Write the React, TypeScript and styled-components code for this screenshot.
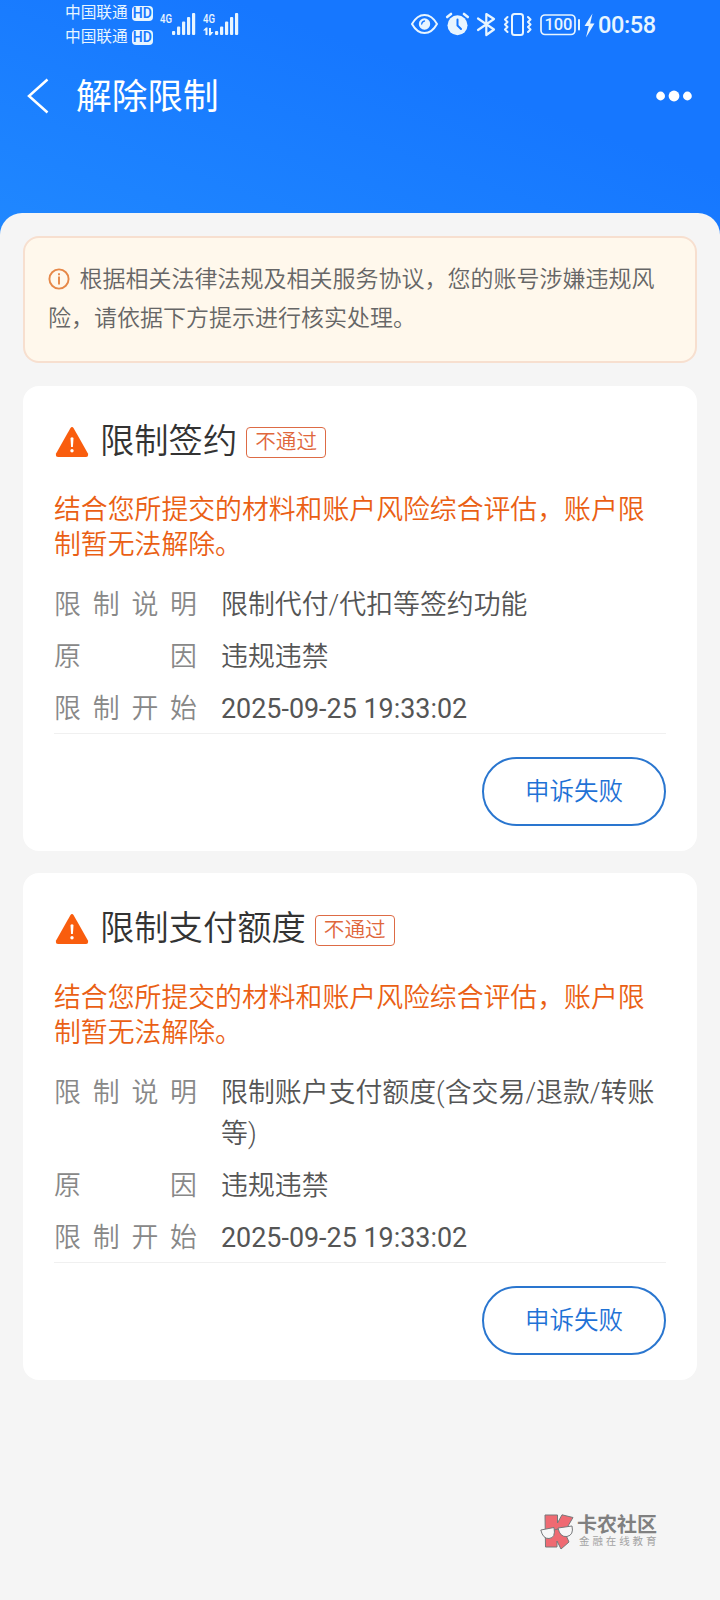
import React from 'react';
import styled, { createGlobalStyle } from 'styled-components';

const GlobalStyle = createGlobalStyle`
  * { box-sizing: border-box; }
  body {
    margin: 0;
    background: #f5f5f5;
    font-family: Roboto, "Noto Sans CJK SC", sans-serif;
    font-weight: 350;
  }
`;

const Page = styled.main`
  width: 720px;
  height: 1600px;
  display: flex;
  flex-direction: column;
  background: #f5f5f5;
  overflow: hidden;
`;

const Hero = styled.header`
  height: 240px;
  flex: none;
  color: #fff;
  background: linear-gradient(200deg, #1677ff 35%, #2088ff 100%);
`;

const StatusBar = styled.div`
  height: 49px;
  padding: 1px 63px 0 65px;
  display: flex;
  justify-content: space-between;
  color: #e8f5ff;
`;

const Carriers = styled.div`
  display: flex;
  flex-direction: column;
`;

const Carrier = styled.div`
  height: 24px;
  display: flex;
  align-items: center;
  gap: 4px;
  font-size: 15.7px;
  font-weight: 400;
  line-height: 24px;
`;

const HdBadge = styled.span`
  width: 21px;
  height: 15px;
  border-radius: 4px;
  background: #e8f5ff;
  color: #1677ff;
  font-size: 14px;
  font-weight: 600;
  line-height: 15px;
  text-align: center;
`;

const StatusGroup = styled.div`
  display: flex;
`;

const SignalIcon = styled.svg`
  display: block;
  width: 80px;
  height: 48px;
  margin-left: 6px;
`;

const TrayIcons = styled.svg`
  display: block;
  width: 187px;
  height: 48px;
`;

const Clock = styled.time`
  width: 59px;
  font-size: 23.5px;
  font-weight: 500;
  line-height: 48px;
  letter-spacing: -0.4px;
  white-space: nowrap;
`;

const NavBar = styled.nav`
  height: 94px;
  padding: 0 28px 0 27px;
  display: flex;
  align-items: center;
`;

const BackIcon = styled.svg`
  width: 22px;
  height: 36px;
  flex: none;
`;

const NavTitle = styled.h1`
  margin: 2px 0 0 27px;
  flex: 1;
  font-size: 35.7px;
  font-weight: 400;
  line-height: 94px;
`;

const MoreIcon = styled.svg`
  width: 36px;
  height: 12px;
`;

const Sheet = styled.section`
  flex: 1;
  margin-top: -27px;
  padding: 23px 23px 0;
  display: flex;
  flex-direction: column;
  border-radius: 22px 22px 0 0;
  background: #f5f5f5;
`;

const Notice = styled.div`
  height: 127px;
  margin-bottom: 0.5px;
  padding: 22px 24px 0 23px;
  border: 2px solid #f7dfcf;
  border-radius: 16px;
  background: #fff8ec;
  color: #666;
  font-size: 23px;
  line-height: 39px;
`;

const InfoIcon = styled.svg`
  width: 22px;
  height: 22px;
  margin: 0 10px 0 -0.5px;
  vertical-align: -2.5px;
`;

const Card = styled.article`
  margin-top: 22px;
  padding: 31px 31px 25px;
  border-radius: 16px;
  background: #fff;
`;

const CardHeader = styled.div`
  height: 50px;
  display: flex;
  align-items: center;
`;

const WarningIcon = styled.svg`
  width: 34px;
  height: 32px;
  margin-left: 1px;
`;

const CardTitle = styled.h2`
  margin: -2px 9px 0 11px;
  color: #333;
  font-size: 34.3px;
  font-weight: 350;
  line-height: 50px;
`;

const Tag = styled.span`
  height: 31px;
  padding: 0 8px;
  margin-top: 2px;
  border: 1px solid #dd6b45;
  border-radius: 4px;
  color: #e0673c;
  font-size: 20.6px;
  line-height: 28px;
`;

const Reason = styled.p`
  margin: 26.3px 0 0;
  color: #ea5f14;
  font-size: 26.85px;
  line-height: 35.3px;
`;

const Details = styled.dl`
  margin: 21.7px 0 0;
  padding-bottom: 3.4px;
  display: flex;
  flex-direction: column;
  gap: 11px;
  border-bottom: 1px solid #f0f0f0;
`;

const DetailRow = styled.div`
  display: flex;
  gap: 24px;
  font-size: 26.9px;
  line-height: 41px;
`;

const Label = styled.dt`
  width: 143px;
  flex: none;
  color: #888;
  text-align: justify;
  text-align-last: justify;
`;

const Value = styled.dd<{ $numeric?: boolean }>`
  margin: 0;
  flex: 1;
  color: #555;
  font-weight: ${({ $numeric }) => ($numeric ? 400 : 350)};
`;

const Actions = styled.div`
  padding-top: 23px;
  display: flex;
  justify-content: flex-end;
`;

const AppealButton = styled.button`
  width: 184px;
  height: 69px;
  padding: 0 0 4px;
  border: 2px solid #2a76cf;
  border-radius: 35px;
  background: #fff;
  color: #1f72d6;
  font: inherit;
  font-size: 24.5px;
`;

const Watermark = styled.footer`
  margin: auto 39px 50px auto;
  display: flex;
  align-items: center;
  gap: 3px;
`;

const WatermarkLogo = styled.svg`
  width: 34px;
  height: 36px;
`;

const WatermarkText = styled.div`
  width: 81px;
  color: #808080;
`;

const WatermarkName = styled.div`
  font-size: 20px;
  font-weight: 700;
  line-height: 20px;
  height: 20px;
`;

const WatermarkSlogan = styled.div`
  padding-left: 2px;
  color: #a3a3a3;
  font-size: 10.5px;
  font-weight: 400;
  line-height: 14px;
  letter-spacing: 2.9px;
  white-space: nowrap;
`;

interface Restriction {
  title: string;
  description: string;
}

const restrictions: Restriction[] = [
  { title: '限制签约', description: '限制代付/代扣等签约功能' },
  { title: '限制支付额度', description: '限制账户支付额度(含交易/退款/转账等)' },
];

function Signals() {
  return (
    <SignalIcon viewBox="0 0 80 48" fill="#e8f5ff">
      <text x="1" y="22" fontSize="12.5" fontWeight="500" textLength="12" lengthAdjust="spacingAndGlyphs">4G</text>
      <text x="44" y="22" fontSize="12.5" fontWeight="500" textLength="12" lengthAdjust="spacingAndGlyphs">4G</text>
      {[13, 56].map((x) => (
        <g key={x}>
          <rect x={x} y="30" width="3.200" height="4" rx="1" />
          <rect x={x + 5} y="25.500" width="3.200" height="8.500" rx="1" />
          <rect x={x + 10} y="20.500" width="3.200" height="13.500" rx="1" />
          <rect x={x + 15} y="16" width="3.200" height="18" rx="1" />
          <rect x={x + 20} y="12" width="3.200" height="22" rx="1" />
        </g>
      ))}
      <path d="M44 29.500 L47 26.500 H48.500 V34 H46.500 V29.500 Z M50 27 H52 V31 H54.500 L51.500 34.500 H50 Z" />
    </SignalIcon>
  );
}

function Tray() {
  return (
    <TrayIcons viewBox="0 0 187 48" fill="none" stroke="#e8f5ff" strokeWidth="2" strokeLinecap="round" strokeLinejoin="round">
      <path d="M1 23 Q6 14 13.500 14 Q21 14 26 23 Q21 32 13.500 32 Q6 32 1 23 Z" />
      <circle cx="13.500" cy="23" r="5.700" fill="#e8f5ff" stroke="none" />
      <path d="M10.700 23 Q11 20.500 13.500 20" stroke="#1677ff" strokeWidth="1.300" />
      <circle cx="46.500" cy="24.200" r="10" fill="#e8f5ff" stroke="none" />
      <path d="M36.200 16 L40 13 M56.800 16 L53 13" strokeWidth="2.600" />
      <path d="M46.500 18.500 V24.500 L50 28" stroke="#1677ff" />
      <path d="M67 17.500 L83 28.500 L75.300 34 V13 L83 18 L67 29" strokeWidth="2.200" />
      <rect x="101" y="13" width="11" height="21" rx="2.500" />
      <path d="M96.500 16 L94 18.500 L96.500 21 L94 23.500 L96.500 26 L94 28.500 L96.500 31 M117 16 L119.500 18.500 L117 21 L119.500 23.500 L117 26 L119.500 28.500 L117 31" />
      <rect x="130" y="14" width="34" height="19.500" rx="4" strokeWidth="1.700" />
      <path d="M168 19 V28.500" />
      <text x="133.500" y="29" fill="#e8f5ff" stroke="none" fontSize="16.500" fontWeight="500" textLength="28">100</text>
      <path d="M181.500 12.500 L173.500 25 H177.800 L175 36.500 L183.500 22.500 H179.200 Z" fill="#e8f5ff" stroke="none" />
    </TrayIcons>
  );
}

function RestrictionCard({ title, description }: Restriction) {
  return (
    <Card>
      <CardHeader>
        <WarningIcon viewBox="0 0 34 32">
          <path d="M15.200 2.500 Q17 -0.300 18.800 2.500 L32.800 27.300 Q34 30.800 31 31 H3 Q0 30.800 1.200 27.300 Z" fill="#f95d0e" />
          <path d="M15.500 12 Q17 10.500 18.500 12 L17.900 21 H16.100 Z" fill="#fff" />
          <circle cx="17" cy="24.700" r="1.700" fill="#fff" />
        </WarningIcon>
        <CardTitle>{title}</CardTitle>
        <Tag>不通过</Tag>
      </CardHeader>
      <Reason>结合您所提交的材料和账户风险综合评估，账户限制暂无法解除。</Reason>
      <Details>
        <DetailRow><Label>限制说明</Label><Value>{description}</Value></DetailRow>
        <DetailRow><Label>原因</Label><Value>违规违禁</Value></DetailRow>
        <DetailRow><Label>限制开始</Label><Value $numeric>2025-09-25 19:33:02</Value></DetailRow>
      </Details>
      <Actions><AppealButton>申诉失败</AppealButton></Actions>
    </Card>
  );
}

export default function App() {
  return (
    <Page lang="zh-CN">
      <GlobalStyle />
      <Hero>
        <StatusBar>
          <StatusGroup>
            <Carriers>
              <Carrier>中国联通<HdBadge>HD</HdBadge></Carrier>
              <Carrier>中国联通<HdBadge>HD</HdBadge></Carrier>
            </Carriers>
            <Signals />
          </StatusGroup>
          <StatusGroup>
            <Tray />
            <Clock>00:58</Clock>
          </StatusGroup>
        </StatusBar>
        <NavBar>
          <BackIcon viewBox="0 0 22 36" fill="none" stroke="#fff" strokeWidth="2.500">
            <path d="M20.500 1.500 L2 18 L20.500 34.500" />
          </BackIcon>
          <NavTitle>解除限制</NavTitle>
          <MoreIcon viewBox="0 0 36 12" fill="#fff">
            <circle cx="4.600" cy="6" r="4.400" />
            <circle cx="18" cy="6" r="5.400" />
            <circle cx="31.400" cy="6" r="4.400" />
          </MoreIcon>
        </NavBar>
      </Hero>
      <Sheet>
        <Notice>
          <InfoIcon viewBox="0 0 22 22" fill="none" stroke="#e68848" strokeWidth="1.900">
            <circle cx="11" cy="11" r="9.600" />
            <path d="M11 8.500 V16.500 M11 5.200 V7.200" />
          </InfoIcon>
          根据相关法律法规及相关服务协议，您的账号涉嫌违规风险，请依据下方提示进行核实处理。
        </Notice>
        {restrictions.map((item) => <RestrictionCard key={item.title} {...item} />)}
        <Watermark>
          <WatermarkLogo viewBox="0 0 34 36" stroke="#77797b" strokeWidth="1" strokeLinejoin="round">
            <path d="M5 1 H17.500 V9 L22 0.800 L33 3.500 L24.500 18 L29 28 L21 35 L17 27 V33 H5.500 Z" fill="#ef6a72" />
            <path d="M0.800 16 L14 13.500 Q16 24 9 24.500 Q3 25 0.800 16 Z M18 14 L32 12 Q34 21 27 22.500 Q20 23.500 18 14 Z" fill="#f7f7f7" />
            <path d="M14 16 L18 15" />
          </WatermarkLogo>
          <WatermarkText>
            <WatermarkName>卡农社区</WatermarkName>
            <WatermarkSlogan>金融在线教育</WatermarkSlogan>
          </WatermarkText>
        </Watermark>
      </Sheet>
    </Page>
  );
}
